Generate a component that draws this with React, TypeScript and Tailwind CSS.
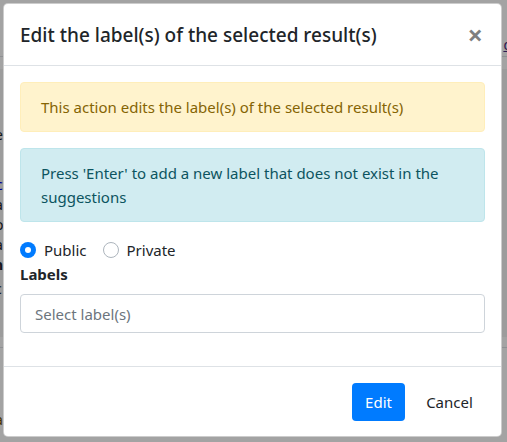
import { useState } from 'react'

const font = { fontFamily: '"Segoe UI", "Noto Sans", Arial, sans-serif' }

function Radio({ checked, label, onSelect }: { checked: boolean; label: string; onSelect: () => void }) {
  return (
    <label className="flex items-center gap-2 cursor-pointer" onClick={onSelect}>
      {checked ? (
        <span className="w-4 h-4 rounded-full bg-[#007bff] flex items-center justify-center">
          <span className="w-[6px] h-[6px] rounded-full bg-white" />
        </span>
      ) : (
        <span className="w-4 h-4 rounded-full border border-[#adb5bd] bg-white" />
      )}
      <span>{label}</span>
    </label>
  )
}

// page behind the modal, only a few pixels of it peek out at the edges
function BackgroundPage() {
  return (
    <div className="w-[507px] h-[442px] bg-white text-[14px] leading-5 text-[#212529] overflow-hidden">
      <div className="h-[57px] border-b border-[#dee2e6] flex justify-between items-start pt-[27px]">
        <span className="-ml-[4px] font-bold">l</span>
        <span className="mr-[-5px] mt-[8px] text-[#4b2a7a] underline">d</span>
      </div>
      <div className="mt-[12px] h-[268px] bg-[#f4f4f4] pt-[56px] flex flex-col">
        <span className="-ml-[5px]">e</span>
        <span className="-ml-[4px] mt-[30px] text-[#0000ee]">c</span>
        <span className="-ml-[5px]">a</span>
        <span className="-ml-[5px]">o</span>
        <span className="-ml-[5px]">a</span>
        <span className="-ml-[6px] font-bold">n</span>
        <span className="-ml-[5px] mt-[4px]">c</span>
      </div>
      <div className="mt-[10px] border-t border-[#dee2e6] pt-[62px] flex flex-col">
        <span className="-ml-[5px] text-[#6b4a00]">a</span>
      </div>
    </div>
  )
}

export default function App() {
  const [visibility, setVisibility] = useState<'public' | 'private'>('public')

  return (
    <div className="relative w-[507px] h-[442px] overflow-hidden">
      <BackgroundPage />

      <div
        className="absolute inset-0 bg-black/[0.36] pt-[3px] pl-[3px] text-[15px] leading-6 text-[#212529]"
        style={font}
      >
        <div className="w-[499px] h-[434px] bg-white border border-black/20 rounded-[5px] flex flex-col">
          <div className="flex items-start justify-between px-4 pt-4 pb-[15px] border-b border-[#dee2e6]">
            <h5 className="text-[19px] leading-[30px] font-medium">Edit the label(s) of the selected result(s)</h5>
            <button className="text-[27px] leading-[30px] font-bold text-black/50 pr-[2px]">×</button>
          </div>

          <div className="px-4 pt-4 flex flex-col">
            <div className="bg-[#fff3cd] border border-[#ffeeba] text-[#856404] rounded-[4px] px-5 py-3 mb-4">
              This action edits the label(s) of the selected result(s)
            </div>
            <div className="bg-[#d1ecf1] border border-[#bee5eb] text-[#0c5460] rounded-[4px] px-5 py-3 mb-4">
              Press 'Enter' to add a new label that does not exist in the suggestions
            </div>
            <div className="flex items-center gap-4">
              <Radio checked={visibility === 'public'} label="Public" onSelect={() => setVisibility('public')} />
              <Radio checked={visibility === 'private'} label="Private" onSelect={() => setVisibility('private')} />
            </div>
            <div className="font-bold mb-2">Labels</div>
            <input
              className="h-[39px] border border-[#ced4da] rounded-[4px] px-[14px] outline-none placeholder:text-[#6c757d]"
              placeholder="Select label(s)"
            />
          </div>

          <div className="mt-auto border-t border-[#dee2e6] flex justify-end items-center gap-2 pl-4 pr-[15px] pt-4 pb-[15px]">
            <button className="bg-[#007bff] text-white rounded-[4px] h-[38px] w-[53px]">Edit</button>
            <button className="text-[#212529] h-[38px] w-[73px]">Cancel</button>
          </div>
        </div>
      </div>
    </div>
  )
}
